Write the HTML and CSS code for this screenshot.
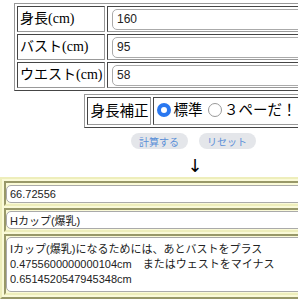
FILE: index.html
```html
<!DOCTYPE html>
<html lang="ja">
<head>
    <meta charset="UTF-8">
    <title>カップ計算</title>
    <link rel="stylesheet" href="styles.css">
</head>
<body>

    <div class="page">
        <!-- Input Table -->
        <table class="input-table">
            <tr>
                <td class="label">身長(cm)</td>
                <td class="cell"><input type="text" class="field" value="160"></td>
            </tr>
            <tr>
                <td class="label">バスト(cm)</td>
                <td class="cell"><input type="text" class="field" value="95"></td>
            </tr>
            <tr>
                <td class="label">ウエスト(cm)</td>
                <td class="cell"><input type="text" class="field" value="58"></td>
            </tr>
        </table>

        <!-- Height correction -->
        <table class="option-table">
            <tr>
                <td class="label">身長補正</td>
                <td class="radios">
                    <label><input type="radio" name="fix" checked>標準</label>
                    <label><input type="radio" name="fix">３ペーだ！</label>
                </td>
            </tr>
        </table>

        <div class="buttons">
            <button type="button">計算する</button>
            <button type="button">リセット</button>
        </div>

        <div class="arrow">↓</div>

        <!-- Result Table -->
        <table class="result-table">
            <tr>
                <td><input type="text" class="out" value="66.72556"></td>
            </tr>
            <tr>
                <td><input type="text" class="out" value="Hカップ(爆乳)"></td>
            </tr>
            <tr>
                <td><textarea class="out note">Iカップ(爆乳)になるためには、あとバストをプラス
0.4755600000000104cm　またはウェストをマイナス
0.6514520547945348cm</textarea></td>
            </tr>
        </table>
    </div>

</body>
</html>
```

FILE: styles.css
```css
body {
    margin: 0;
    overflow: hidden;
    background: #fff;
    font-family: "Liberation Serif", "Noto Sans CJK JP", serif;
}

.page {
    width: 386px;
    padding-top: 3px;
}

.input-table {
    width: 358px;
    margin: 0 auto;
    border: 1px outset #999;
    border-spacing: 2px;
}

.input-table td,
.option-table td {
    border: 1px inset #999;
    padding: 1px;
}

.label {
    font-size: 14px;
    line-height: 22px;
    white-space: nowrap;
    width: 84px;
}

.input-table .label {
    padding: 1px 0 1px 2px;
}

.input-table .cell {
    padding: 1px 3px 1px 4px;
}

.field {
    width: 100%;
    height: 21px;
    box-sizing: border-box;
    border: 1px solid #aaa;
    border-radius: 5px;
    padding: 0 4px;
    font-family: "Liberation Sans", "Noto Sans CJK JP", sans-serif;
    font-size: 12px;
    color: #222;
}

.option-table {
    margin: 3px auto 0;
    border: 1px outset #999;
    border-spacing: 2px;
}

.option-table .label {
    width: auto;
    padding: 1px 2px;
    font-size: 14.5px;
}

.radios {
    font-size: 14.5px;
    line-height: 22px;
    white-space: nowrap;
    padding: 1px 2px 1px 2px;
}

.radios label {
    display: inline-flex;
    align-items: center;
}

input[type="radio"] {
    appearance: none;
    -webkit-appearance: none;
    width: 14px;
    height: 14px;
    margin: 0 2px 0 2px;
    border: 1px solid #999;
    border-radius: 50%;
    background: #fff;
    box-sizing: border-box;
}

input[type="radio"]:checked {
    border: 4px solid #2a78f0;
}

.buttons {
    display: flex;
    justify-content: center;
    gap: 11px;
    margin-top: 5px;
}

button {
    width: 57px;
    height: 16px;
    padding: 0;
    border: none;
    border-radius: 8px;
    background: #e4e6ea;
    color: #5a8fd8;
    font-family: "Noto Sans CJK JP", sans-serif;
    font-size: 10px;
    cursor: pointer;
}

.arrow {
    text-align: center;
    font-family: "DejaVu Sans", sans-serif;
    font-size: 18px;
    line-height: 22px;
    padding: 6px 0 0 4px;
}

.result-table {
    width: 386px;
    margin: 0;
    border: 2px solid;
    border-color: #eeeebb #989868 #989868 #eeeebb;
    background: #fafad8;
    border-spacing: 2px;
}

.result-table td {
    border: 2px solid;
    border-color: #989868 #eeeebb #eeeebb #989868;
    padding: 1px 0;
}

.out {
    width: 100%;
    box-sizing: border-box;
    height: 18px;
    border: 1px solid #aaa;
    border-radius: 5px;
    padding: 0 3px;
    font-family: "Liberation Sans", "Noto Sans CJK JP", sans-serif;
    font-size: 11px;
    color: #222;
    background: #fff;
}

.note {
    display: block;
    height: 55px;
    resize: none;
    padding: 4px 3px;
    line-height: 15px;
    overflow: hidden;
}
```
